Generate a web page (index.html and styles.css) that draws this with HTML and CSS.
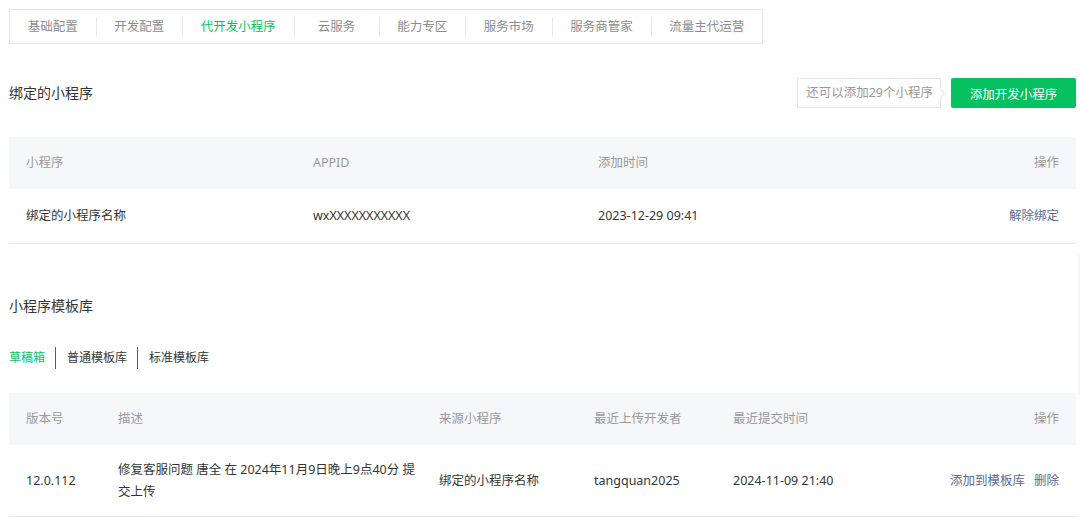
FILE: index.html
```html
<!DOCTYPE html>
<html lang="zh-CN">
<head>
<meta charset="utf-8">
<title>代开发小程序</title>
<link rel="stylesheet" href="styles.css">
</head>
<body>
<div class="page">
  <nav class="tabbar">
    <a class="tab">基础配置</a>
    <a class="tab">开发配置</a>
    <a class="tab active">代开发小程序</a>
    <a class="tab">云服务</a>
    <a class="tab">能力专区</a>
    <a class="tab">服务市场</a>
    <a class="tab">服务商管家</a>
    <a class="tab">流量主代运营</a>
  </nav>

  <div class="section-head">
    <h2 class="title">绑定的小程序</h2>
    <div class="actions">
      <div class="tip">还可以添加29个小程序</div>
      <button class="btn-primary">添加开发小程序</button>
    </div>
  </div>

  <div class="table t1">
    <div class="row head">
      <div class="cell">小程序</div>
      <div class="cell">APPID</div>
      <div class="cell">添加时间</div>
      <div class="cell right">操作</div>
    </div>
    <div class="row body r1">
      <div class="cell">绑定的小程序名称</div>
      <div class="cell">wxXXXXXXXXXXX</div>
      <div class="cell">2023-12-29 09:41</div>
      <div class="cell right"><a class="link">解除绑定</a></div>
    </div>
  </div>

  <h2 class="title title2">小程序模板库</h2>

  <div class="subtabs">
    <a class="subtab active">草稿箱</a>
    <a class="subtab">普通模板库</a>
    <a class="subtab">标准模板库</a>
  </div>

  <div class="table t2">
    <div class="row head">
      <div class="cell">版本号</div>
      <div class="cell">描述</div>
      <div class="cell">来源小程序</div>
      <div class="cell">最近上传开发者</div>
      <div class="cell">最近提交时间</div>
      <div class="cell right">操作</div>
    </div>
    <div class="row body r2">
      <div class="cell">12.0.112</div>
      <div class="cell desc">修复客服问题 唐全 在 2024年11月9日晚上9点40分 提交上传</div>
      <div class="cell">绑定的小程序名称</div>
      <div class="cell">tangquan2025</div>
      <div class="cell">2024-11-09 21:40</div>
      <div class="cell right"><a class="link">添加到模板库</a><a class="link gap">删除</a></div>
    </div>
  </div>
</div>
<div class="edge-shadow"></div>
</body>
</html>
```

FILE: styles.css
```css
* { box-sizing: border-box; }

html, body {
  margin: 0;
  padding: 0;
  background: #fff;
}

body {
  font-family: "Noto Sans", "Noto Sans CJK SC", sans-serif;
  font-size: 12.5px;
  color: #353535;
  width: 1080px;
  height: 518px;
  overflow: hidden;
  position: relative;
}

.page {
  padding: 9px 4px 0 9px;
}

/* top tab bar */
.tabbar {
  display: inline-flex;
  align-items: center;
  height: 35px;
  border: 1px solid #e7e7eb;
}

.tab {
  min-width: 85px;
  padding: 0 17.75px;
  text-align: center;
  line-height: 20px;
  color: #8d8d8d;
  cursor: pointer;
}

.tab + .tab {
  border-left: 1px solid #e7e7eb;
}

.tab.active {
  color: #07c160;
}

/* section header */
.section-head {
  display: flex;
  align-items: center;
  justify-content: space-between;
  margin-top: 34px;
  height: 30px;
}

.title {
  margin: 0;
  font-size: 14px;
  font-weight: normal;
  line-height: 22px;
  color: #353535;
}

.actions {
  display: flex;
  align-items: center;
  gap: 10px;
}

.tip {
  position: relative;
  height: 30px;
  line-height: 28px;
  padding: 0 7px 0 8px;
  border: 1px solid #e7e7eb;
  color: #9a9a9a;
  background: #fff;
}

.tip::after {
  content: "";
  position: absolute;
  right: -4px;
  top: 50%;
  width: 6px;
  height: 6px;
  margin-top: -3px;
  background: #fff;
  border-top: 1px solid #e7e7eb;
  border-right: 1px solid #e7e7eb;
  transform: rotate(45deg);
}

.btn-primary {
  height: 30px;
  width: 125px;
  border: 0;
  border-radius: 2px;
  background: #07c160;
  color: #fff;
  font-family: inherit;
  font-size: 12.5px;
  padding: 0;
}

/* tables */
.table {
  width: 1067px;
}

.t1 {
  margin-top: 29px;
}

.row {
  display: grid;
  align-items: center;
}

.t1 .row {
  grid-template-columns: 287px 285px 1fr auto;
}

.t2 .row {
  grid-template-columns: 92px 321px 155px 139px 1fr auto;
}

.row.head {
  height: 52px;
  background: #f6f7f9;
  color: #9a9a9a;
}

.row.body {
  border-bottom: 1px solid #e8e8ea;
}

.r1 {
  height: 55px;
}

.r2 {
  height: 72px;
}

.cell {
  padding: 0 17px;
  line-height: 22px;
}

.cell.right {
  text-align: right;
}

.cell.desc {
  padding-right: 2px;
}

.link {
  color: #576b95;
  cursor: pointer;
}

.link.gap {
  margin-left: 9px;
}

.title2 {
  margin-top: 51px;
}

/* sub tabs */
.subtabs {
  display: flex;
  align-items: center;
  margin-top: 30px;
  height: 22px;
}

.subtab {
  padding: 0 10px 0 11px;
  font-size: 12px;
  line-height: 22px;
  color: #353535;
  cursor: pointer;
}

.subtab:first-child {
  padding-left: 0;
}

.subtab + .subtab {
  border-left: 1px solid #5c5c5c;
}

.subtab.active {
  color: #07c160;
}

.t2 {
  margin-top: 24px;
}

/* faint floating edge on right */
.edge-shadow {
  position: absolute;
  right: 0;
  top: 255px;
  width: 3px;
  height: 140px;
  background: linear-gradient(to right, rgba(0,0,0,0), rgba(0,0,0,0.05));
}
```
